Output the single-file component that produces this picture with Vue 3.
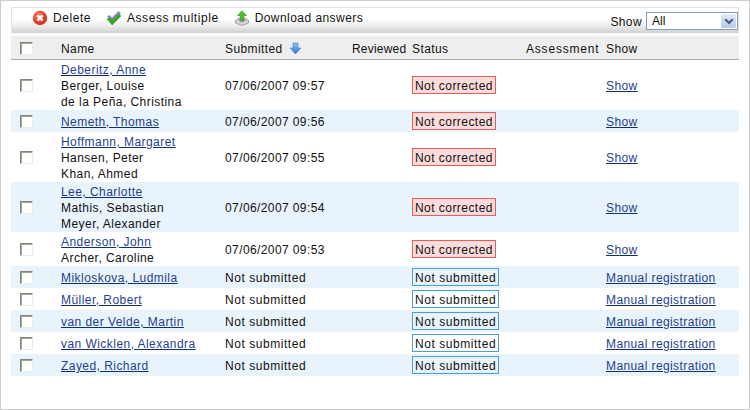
<script setup>
const rows = [
  { names: ['Deberitz, Anne', 'Berger, Louise', 'de la Peña, Christina'], submitted: '07/06/2007 09:57', done: true },
  { names: ['Nemeth, Thomas'], submitted: '07/06/2007 09:56', done: true },
  { names: ['Hoffmann, Margaret', 'Hansen, Peter', 'Khan, Ahmed'], submitted: '07/06/2007 09:55', done: true },
  { names: ['Lee, Charlotte', 'Mathis, Sebastian', 'Meyer, Alexander'], submitted: '07/06/2007 09:54', done: true },
  { names: ['Anderson, John', 'Archer, Caroline'], submitted: '07/06/2007 09:53', done: true },
  { names: ['Mikloskova, Ludmila'], submitted: 'Not submitted', done: false },
  { names: ['Müller, Robert'], submitted: 'Not submitted', done: false },
  { names: ['van der Velde, Martin'], submitted: 'Not submitted', done: false },
  { names: ['van Wicklen, Alexandra'], submitted: 'Not submitted', done: false },
  { names: ['Zayed, Richard'], submitted: 'Not submitted', done: false },
]
</script>

<template>
  <div class="page">
    <div class="toolbar">
      <div class="actions">
        <span class="action">
          <svg width="16" height="16" viewBox="0 0 16 16">
            <defs>
              <radialGradient id="red" cx="40%" cy="35%" r="70%">
                <stop offset="0" stop-color="#ff8a70" />
                <stop offset=".6" stop-color="#ea3d26" />
                <stop offset="1" stop-color="#c92a18" />
              </radialGradient>
            </defs>
            <circle cx="8" cy="8" r="7.200" fill="url(#red)" />
            <path d="M5.400 5.400l5.200 5.200M10.600 5.400l-5.200 5.200" stroke="#fff" stroke-width="2.400" />
          </svg>
          Delete
        </span>
        <span class="action">
          <svg width="16" height="16" viewBox="0 0 16 16">
            <path d="M1 6.500l2.500-1.500 2.500 2.500L12.500 1 15 3 6 11z" fill="#8d90c4" />
            <path d="M1 9l2.500-1.500 2.700 2.700L13 4l2 2-8.800 9z" fill="#38a82c" stroke="#2c8a22" stroke-width=".5" />
          </svg>
          Assess multiple
        </span>
        <span class="action download">
          <svg width="16" height="16" viewBox="0 0 16 16">
            <path d="M1.500 10.500L5 8h6l3.500 2.500V13L8 15.500 1.500 13z" fill="#d4d5d2" stroke="#85867f" stroke-width=".7" />
            <path d="M4 10l4 2.500 4-2.500-4-1.500z" fill="#8d8e88" />
            <path d="M8 .8l4.500 4.700h-2.700V10H6.200V5.500H3.500z" fill="#4fc030" stroke="#2e8f1e" stroke-width=".6" />
          </svg>
          Download answers
        </span>
      </div>
      <div class="filter">
        <span class="filter-label">Show</span>
        <span class="select">
          <span class="select-value">All</span>
          <span class="select-btn">
            <svg width="10" height="7" viewBox="0 0 10 7">
              <path d="M1.200 1.200L5 5l3.800-3.800" fill="none" stroke="#4a5d80" stroke-width="2.200" />
            </svg>
          </span>
        </span>
      </div>
    </div>

    <table class="list">
      <thead>
        <tr>
          <th class="c-check"><span class="box"></span></th>
          <th class="c-name">Name</th>
          <th class="c-sub">
            Submitted
            <svg class="sort" width="13" height="13" viewBox="0 0 13 13">
              <defs>
                <linearGradient id="blue" x1="0" y1="0" x2="0" y2="1">
                  <stop offset="0" stop-color="#8cc0f2" />
                  <stop offset="1" stop-color="#2a7bd8" />
                </linearGradient>
              </defs>
              <path d="M4 1h5v5h3L6.500 12 1 6h3z" fill="url(#blue)" stroke="#3a80d0" stroke-width=".6" />
            </svg>
          </th>
          <th class="c-rev">Reviewed</th>
          <th class="c-status">Status</th>
          <th class="c-assess">Assessment</th>
          <th class="c-show">Show</th>
        </tr>
      </thead>
      <tbody>
        <tr v-for="(row, i) in rows" :key="i" :class="{ odd: i % 2 === 1 }">
          <td class="c-check"><span class="box"></span></td>
          <td class="names">
            <div v-for="(n, j) in row.names" :key="n">
              <a v-if="j === 0" href="#">{{ n }}</a>
              <template v-else>{{ n }}</template>
            </div>
          </td>
          <td :class="{ missing: !row.done }">{{ row.submitted }}</td>
          <td></td>
          <td class="c-tag">
            <span class="tag" :class="row.done ? 'tag-red' : 'tag-blue'">{{ row.done ? 'Not corrected' : 'Not submitted' }}</span>
          </td>
          <td></td>
          <td><a href="#">{{ row.done ? 'Show' : 'Manual registration' }}</a></td>
        </tr>
      </tbody>
    </table>
  </div>
</template>

<style>
html, body { margin: 0; background: #fff; }
</style>

<style scoped>
.page {
  box-sizing: border-box;
  width: 750px;
  height: 410px;
  border: 1px solid #cdcdcd;
  padding: 6px 10px 0;
  font: 12px/16px "Liberation Sans", Arial, sans-serif;
  letter-spacing: .4px;
  color: #111;
  background: #fff;
}
.toolbar {
  box-sizing: border-box;
  height: 26px;
  display: flex;
  justify-content: space-between;
  border: 1px solid #e2e2e2;
  border-bottom: 0;
  background: linear-gradient(#fff 0, #fff 42%, #f0f0f0 68%, #d2d0d2 100%);
}
.actions { display: flex; gap: 15px; padding-left: 20px; height: 20px; align-items: center; }
.action { display: flex; align-items: center; gap: 5px; letter-spacing: .55px; }
.download { letter-spacing: .45px; }
.filter { display: flex; align-items: flex-start; gap: 4px; padding-top: 4px; }
.filter-label { line-height: 21px; }
.select {
  box-sizing: border-box;
  width: 92px;
  height: 18px;
  display: flex;
  justify-content: space-between;
  border: 1px solid #7f9db9;
  background: #fff;
  letter-spacing: 0;
}
.select-value { padding-left: 5px; line-height: 17px; }
.select-btn {
  width: 15px;
  margin: 1px;
  display: flex;
  align-items: center;
  justify-content: center;
  border-radius: 2px;
  background: linear-gradient(#e3ebfb, #b6c8ec);
}
.list {
  width: 728px;
  margin-top: 3px;
  table-layout: fixed;
  border-collapse: separate;
  border-spacing: 0;
}
.list th {
  height: 21px;
  padding: 2px 0 0;
  font-weight: 400;
  text-align: left;
  background: #eeeeee;
  border-bottom: 1px solid #a8acb0;
}
.list td { height: 22px; padding: 2px 0 0; box-sizing: border-box; vertical-align: middle; }
.list tr.odd td { background: #e8f3fc; }
.list th.c-check { width: 50px; padding-left: 9px; box-sizing: border-box; }
.list td.c-check { padding: 1px 0 1px 9px; }
.list td.c-tag { padding: 1px 0; }
.c-name { width: 164px; }
.c-sub { width: 127px; }
.c-rev { width: 60px; letter-spacing: .2px; }
.c-status { width: 114px; }
.c-assess { width: 80px; letter-spacing: .8px; }
.names { letter-spacing: .45px; }
.missing { letter-spacing: .55px; }
.box {
  display: block;
  box-sizing: border-box;
  width: 13px;
  height: 13px;
  border: 1px solid #ecebe4;
  border-top-color: #85847a;
  border-left-color: #85847a;
  box-shadow: inset 1px 1px #a5a498;
  background: #fff;
}
.sort { vertical-align: -2px; margin-left: 3px; }
a { color: #1f3f8f; text-decoration: underline; text-decoration-color: #0d3070; }
.tag {
  display: block;
  box-sizing: border-box;
  width: max-content;
  height: 18px;
  padding: 0 2px;
  border: 1px solid;
  line-height: 18px;
  letter-spacing: .45px;
}
.tag-red { background: #fddcdc; border-color: #ee5a5a; }
.tag-blue { border-color: #4a9bdf; letter-spacing: .55px; }
</style>
